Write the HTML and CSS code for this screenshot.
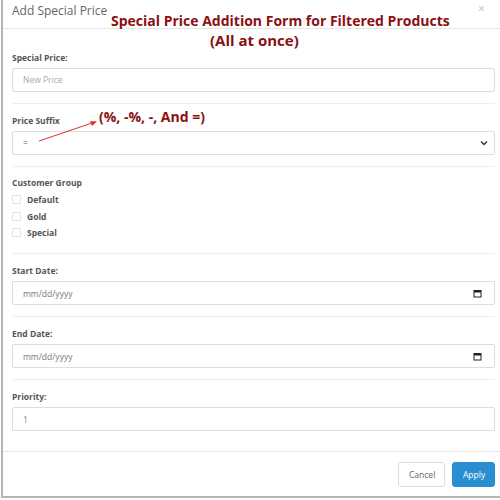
FILE: index.html
```html
<!DOCTYPE html>
<html>
<head>
<meta charset="utf-8">
<link rel="stylesheet" href="styles.css">
</head>
<body>
<div class="modal">
  <div class="modal-header">
    <span class="modal-title">Add Special Price</span>
    <span class="close">×</span>
  </div>
  <div class="modal-body">
    <div class="group first">
      <label class="lbl">Special Price:</label>
      <div class="field"><span class="ph">New Price</span></div>
    </div>
    <div class="group">
      <label class="lbl">Price Suffix</label>
      <div class="field select"><span class="val">=</span>
        <svg class="chev" width="8" height="6" viewBox="0 0 8 6"><path d="M1 1.5 L4 4.5 L7 1.5" fill="none" stroke="#333" stroke-width="1.5"/></svg>
      </div>
    </div>
    <div class="group checks-group">
      <label class="lbl">Customer Group</label>
      <div class="checks">
        <div class="check"><span class="box"></span><span>Default</span></div>
        <div class="check"><span class="box"></span><span>Gold</span></div>
        <div class="check"><span class="box"></span><span>Special</span></div>
      </div>
    </div>
    <div class="group">
      <label class="lbl">Start Date:</label>
      <div class="field date"><span class="val">mm/dd/yyyy</span>
        <svg class="cal" width="9" height="9" viewBox="0 0 9 9"><rect x="1" y="1.5" width="7" height="6.5" fill="none" stroke="#222" stroke-width="1"/><rect x="1" y="1.5" width="7" height="2" fill="#222"/></svg>
      </div>
    </div>
    <div class="group">
      <label class="lbl">End Date:</label>
      <div class="field date"><span class="val">mm/dd/yyyy</span>
        <svg class="cal" width="9" height="9" viewBox="0 0 9 9"><rect x="1" y="1.5" width="7" height="6.5" fill="none" stroke="#222" stroke-width="1"/><rect x="1" y="1.5" width="7" height="2" fill="#222"/></svg>
      </div>
    </div>
    <div class="group last">
      <label class="lbl">Priority:</label>
      <div class="field"><span class="val">1</span></div>
    </div>
  </div>
  <div class="modal-footer">
    <button class="btn cancel">Cancel</button>
    <button class="btn apply">Apply</button>
  </div>
  <div class="note-title l1">Special Price Addition Form for Filtered Products</div>
  <div class="note-title l2">(All at once)</div>
  <div class="note-suffix">(%, -%, -, And =)</div>
  <svg class="arrow" width="70" height="30" viewBox="0 0 70 30"><line x1="2" y1="26" x2="55" y2="8" stroke="#e03030" stroke-width="1"/><path d="M60 6.5 L53 6 L55 11 Z" fill="#e03030"/></svg>
</div>
</body>
</html>
```

FILE: styles.css
```css
html, body { margin: 0; padding: 0; background: #fff; }
body { font-family: "Open Sans", "Liberation Sans", sans-serif; color: #555; }
.modal {
  position: relative;
  margin-left: 1px;
  width: 510px;
  height: 498px;
  border-left: 2px solid #b5b5b5;
  border-bottom: 2px solid #b5b5b5;
  box-sizing: border-box;
  display: flex;
  flex-direction: column;
}
.modal-header {
  height: 30px;
  border-bottom: 1px solid #e5e5e5;
  display: flex;
  align-items: center;
  padding-left: 9px;
  box-sizing: border-box;
}
.modal-title { font-size: 12px; color: #666; margin-top: -6px; }
.close { position: absolute; left: 475px; top: 0px; font-size: 12px; color: #bbb; }
.modal-body { padding: 0 16px 0 9px; }
.group { border-bottom: 1px solid #eee; padding: 11px 0 11px; }
.group.first { padding-top: 23px; }
.group.last { border-bottom: none; padding-bottom: 20px; }
.checks-group { padding-top: 10px; padding-bottom: 12px; }
.lbl { display: block; font-size: 8.5px; font-weight: bold; color: #555; margin-bottom: 4px; line-height: 12px; }
.field {
  height: 24px;
  border: 1px solid #ddd;
  border-radius: 2px;
  box-sizing: border-box;
  display: flex;
  align-items: center;
  padding: 0 10px;
  font-size: 8.5px;
  color: #888;
}
.ph { color: #aaa; }
.select .val { color: #666; }
.date .val { color: #777; }
.field .val { flex: 1; }
.chev { margin-right: -4px; }
.cal { margin-right: 2px; }
.checks { display: flex; flex-direction: column; margin-top: -1px; }
.check { display: flex; align-items: center; gap: 6px; font-size: 8.5px; font-weight: bold; color: #555; height: 16.5px; }
.box { width: 7px; height: 7px; border: 1px solid #e2e2e2; border-radius: 1px; }
.modal-footer {
  border-top: 1px solid #e5e5e5;
  margin-top: auto;
  height: 47px;
  display: flex;
  justify-content: flex-start;
  align-items: center;
  gap: 7px;
  padding-left: 395px;
  box-sizing: border-box;
}
.btn { height: 25px; border-radius: 3px; font-family: "Open Sans", sans-serif; font-size: 8.5px; padding: 0 10px; }
.cancel { background: #fff; border: 1px solid #ddd; color: #666; width: 47px; }
.apply { background: #2a8fd0; border: 1px solid #2a8fd0; color: #fff; width: 43px; }
.note-title {
  position: absolute; white-space: nowrap;
  font-family: "Open Sans", sans-serif; font-weight: bold; font-size: 14px; line-height: 17px; color: #8b0f12;
}
.l1 { left: 108px; top: 12px; }
.l2 { left: 207px; top: 32px; font-size: 15px; }
.note-suffix {
  position: absolute; left: 96px; top: 107px; white-space: nowrap;
  font-family: "Open Sans", sans-serif; font-weight: bold; font-size: 14px; color: #8b0f12;
}
.arrow { position: absolute; left: 34px; top: 115px; }
```
